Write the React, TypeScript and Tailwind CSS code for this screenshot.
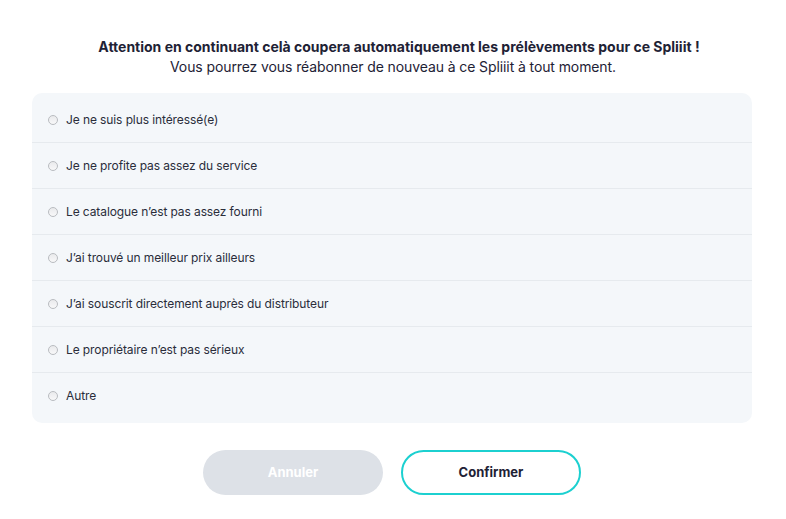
import { useState } from 'react'

const reasons = [
    'Je ne suis plus intéressé(e)',
    'Je ne profite pas assez du service',
    'Le catalogue n’est pas assez fourni',
    'J’ai trouvé un meilleur prix ailleurs',
    'J’ai souscrit directement auprès du distributeur',
    'Le propriétaire n’est pas sérieux',
    'Autre',
]

export default function App() {
    const [selected, setSelected] = useState<number | null>(null)

    return (
        <div className="w-[786px] h-[519px] bg-white font-['Inter',sans-serif] text-[#1e2235]">
            <div className="pt-[37px] text-center">
                <p className="pl-[12px] text-[14px] font-bold leading-[20px]">Attention en continuant celà coupera automatiquement les prélèvements pour ce Spliiit !</p>
                <p className="text-[14px] leading-[20px] tracking-[-0.1px]">Vous pourrez vous réabonner de nouveau à ce Spliiit à tout moment.</p>
            </div>

            <div className="mx-[32px] mt-[16px] w-[720px] rounded-[10px] bg-[#f4f7fa] pt-[4px] pb-[4px]">
                {reasons.map((r, i) => (
                    <label
                        key={i}
                        className={`flex h-[46px] cursor-pointer items-center gap-[8px] pl-[16px] ${i < reasons.length - 1 ? 'border-b border-[#e6eaee]' : ''}`}
                        onClick={() => setSelected(i)}
                    >
                        <span className="flex h-[10px] w-[10px] items-center justify-center rounded-full border border-[#b9bcc0] bg-gradient-to-b from-[#e9eaec] to-[#f8f8f9]">
                            {selected === i && <span className="h-[4px] w-[4px] rounded-full bg-[#1e2235]" />}
                        </span>
                        <span className="text-[12px] tracking-[-0.1px] text-[#2a2d3a]">{r}</span>
                    </label>
                ))}
            </div>

            <div className="mt-[27px] flex justify-center gap-[18px] pr-[2px]">
                <button className="h-[45px] w-[180px] rounded-full bg-[#dde1e7] text-[13px] font-bold text-white">Annuler</button>
                <button className="h-[45px] w-[180px] rounded-full border-2 border-[#1cd0d0] bg-white text-[13px] font-bold text-[#1e2235]">Confirmer</button>
            </div>
        </div>
    )
}
